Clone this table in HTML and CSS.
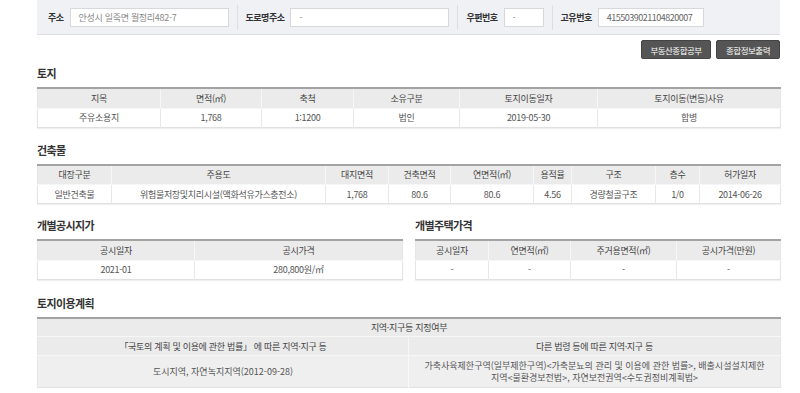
FILE: index.html
```html
<!DOCTYPE html>
<html lang="ko">
<head>
<meta charset="utf-8">
<link rel="stylesheet" href="styles.css">
</head>
<body>
<div class="page">
  <div class="searchbar">
    <div class="field"><span class="lbl">주소</span><span class="inp w-addr">안성시 일죽면 월정리482-7</span></div>
    <div class="field sep"><span class="lbl">도로명주소</span><span class="inp w-addr">-</span></div>
    <div class="field sep"><span class="lbl">우편번호</span><span class="inp w-zip">-</span></div>
    <div class="field sep"><span class="lbl">고유번호</span><span class="inp w-id">4155039021104820007</span></div>
  </div>
  <div class="btnrow">
    <button class="btn b1">부동산종합공부</button>
    <button class="btn b2">종합정보출력</button>
  </div>

  <section class="sec s1">
    <h2 class="title">토지</h2>
    <table class="tbl">
      <colgroup><col style="width:123px"><col style="width:101px"><col style="width:92px"><col style="width:106px"><col style="width:138px"><col style="width:183px"></colgroup>
      <tr><th>지목</th><th>면적(㎡)</th><th>축척</th><th>소유구분</th><th>토지이동일자</th><th>토지이동(변동)사유</th></tr>
      <tr><td>주유소용지</td><td>1,768</td><td>1:1200</td><td>법인</td><td>2019-05-30</td><td>합병</td></tr>
    </table>
  </section>

  <section class="sec s2">
    <h2 class="title">건축물</h2>
    <table class="tbl">
      <colgroup><col style="width:74px"><col style="width:214px"><col style="width:63px"><col style="width:62px"><col style="width:83px"><col style="width:38px"><col style="width:84px"><col style="width:44px"><col style="width:81px"></colgroup>
      <tr><th>대장구분</th><th>주용도</th><th>대지면적</th><th>건축면적</th><th>연면적(㎡)</th><th>용적율</th><th>구조</th><th>층수</th><th>허가일자</th></tr>
      <tr><td>일반건축물</td><td>위험물저장및치리시설(액화석유가스충전소)</td><td>1,768</td><td>80.6</td><td>80.6</td><td>4.56</td><td>경량철골구조</td><td>1/0</td><td>2014-06-26</td></tr>
    </table>
  </section>

  <div class="pair s3">
    <section class="half">
      <h2 class="title">개별공시지가</h2>
      <table class="tbl">
        <colgroup><col style="width:157px"><col style="width:208px"></colgroup>
        <tr><th>공시일자</th><th>공시가격</th></tr>
        <tr><td>2021-01</td><td>280,800원/㎡</td></tr>
      </table>
    </section>
    <section class="half">
      <h2 class="title">개별주택가격</h2>
      <table class="tbl">
        <colgroup><col style="width:73px"><col style="width:82px"><col style="width:106px"><col style="width:104px"></colgroup>
        <tr><th>공시일자</th><th>연면적(㎡)</th><th>주거용면적(㎡)</th><th>공시가격(만원)</th></tr>
        <tr><td>-</td><td>-</td><td>-</td><td>-</td></tr>
      </table>
    </section>
  </div>

  <section class="sec s4">
    <h2 class="title">토지이용계획</h2>
    <table class="tbl plan">
      <colgroup><col style="width:371px"><col style="width:372px"></colgroup>
      <tr><th colspan="2">지역·지구등 지정여부</th></tr>
      <tr><th>「국토의 계획 및 이용에 관한 법률」 에 따른 지역·지구 등</th><th>다른 법령 등에 따른 지역·지구 등</th></tr>
      <tr class="tall"><td>도시지역, 자연녹지지역(2012-09-28)</td><td>가축사육제한구역(일부제한구역)&lt;가축분뇨의 관리 및 이용에 관한 법률&gt;, 배출시설설치제한<br>지역&lt;물환경보전법&gt;, 자연보전권역&lt;수도권정비계획법&gt;</td></tr>
    </table>
  </section>
</div>
</body>
</html>
```

FILE: styles.css
```css
* { box-sizing: border-box; }
html, body { margin: 0; padding: 0; background: #fff; }
body {
  font-family: "Noto Sans CJK KR", "Noto Sans", sans-serif;
  color: #555;
  font-size: 9px;
  letter-spacing: -0.3px;
}
.page { margin-left: 37px; width: 743px; }

.searchbar {
  height: 35px;
  background: #eff1f5;
  border-bottom: 1px solid #dcdee3;
  display: flex;
  align-items: center;
  padding-left: 11px;
}
.field { display: flex; align-items: center; height: 25px; padding-right: 8px; }
.field.sep { border-left: 1px solid #dcdee3; padding-left: 8px; }
.lbl { font-weight: bold; color: #333; font-size: 9px; margin-right: 6px; letter-spacing: -0.5px; }
.inp {
  height: 19px;
  background: #fff;
  border: 1px solid #d6d8dc;
  color: #888;
  line-height: 17px;
  padding-left: 8px;
  font-size: 9px;
}
.w-addr { width: 159px; }
.w-zip { width: 40px; }
.w-id { width: 106px; color: #666; letter-spacing: -0.5px; }

.btnrow { display: flex; justify-content: flex-end; gap: 5px; margin-top: 5px; }
.btn {
  height: 19px;
  border: 1px solid #444;
  border-radius: 2px;
  background: #555;
  color: #fff;
  font-family: inherit;
  font-size: 8.5px;
  letter-spacing: -0.5px;
  padding: 0;
}
.b1 { width: 70px; }
.b2 { width: 64px; }

.title {
  margin: 0 0 7px 0;
  font-size: 11px;
  line-height: 14px;
  font-weight: bold;
  color: #333;
  letter-spacing: -0.6px;
}
.s1 { margin-top: 7px; }
.s2 { margin-top: 15px; }
.s3 { margin-top: 14px; }
.s4 { margin-top: 16px; }

.pair { display: flex; gap: 13px; }
.half { width: 365px; }

.tbl {
  width: 100%;
  table-layout: fixed;
  border-collapse: collapse;
  border-top: 2px solid #a3a3a3;
  border-left: 1px solid #e6e6e6;
  border-right: 1px solid #e6e6e6;
  border-bottom: 1px solid #e0e0e0;
  box-shadow: 0 1px 1px rgba(0,0,0,0.06);
}
.tbl th {
  background: #ebebeb;
  font-weight: normal;
  color: #444;
  height: 20px;
  padding: 0;
  text-align: center;
  border-left: 1px solid #f6f6f6;
  border-bottom: 1px solid #f6f6f6;
}
.tbl td {
  background: #fff;
  height: 19px;
  padding: 0;
  text-align: center;
  border-left: 1px solid #e8e8e8;
}
.tbl th:first-child, .tbl td:first-child { border-left: none; }

.plan th { height: 19px; }
.plan td {
  background: #efefef;
  border-left: 1px solid #f8f8f8;
}
.plan .tall td { height: 32px; line-height: 12px; padding: 0 6px; letter-spacing: 0; }
```
